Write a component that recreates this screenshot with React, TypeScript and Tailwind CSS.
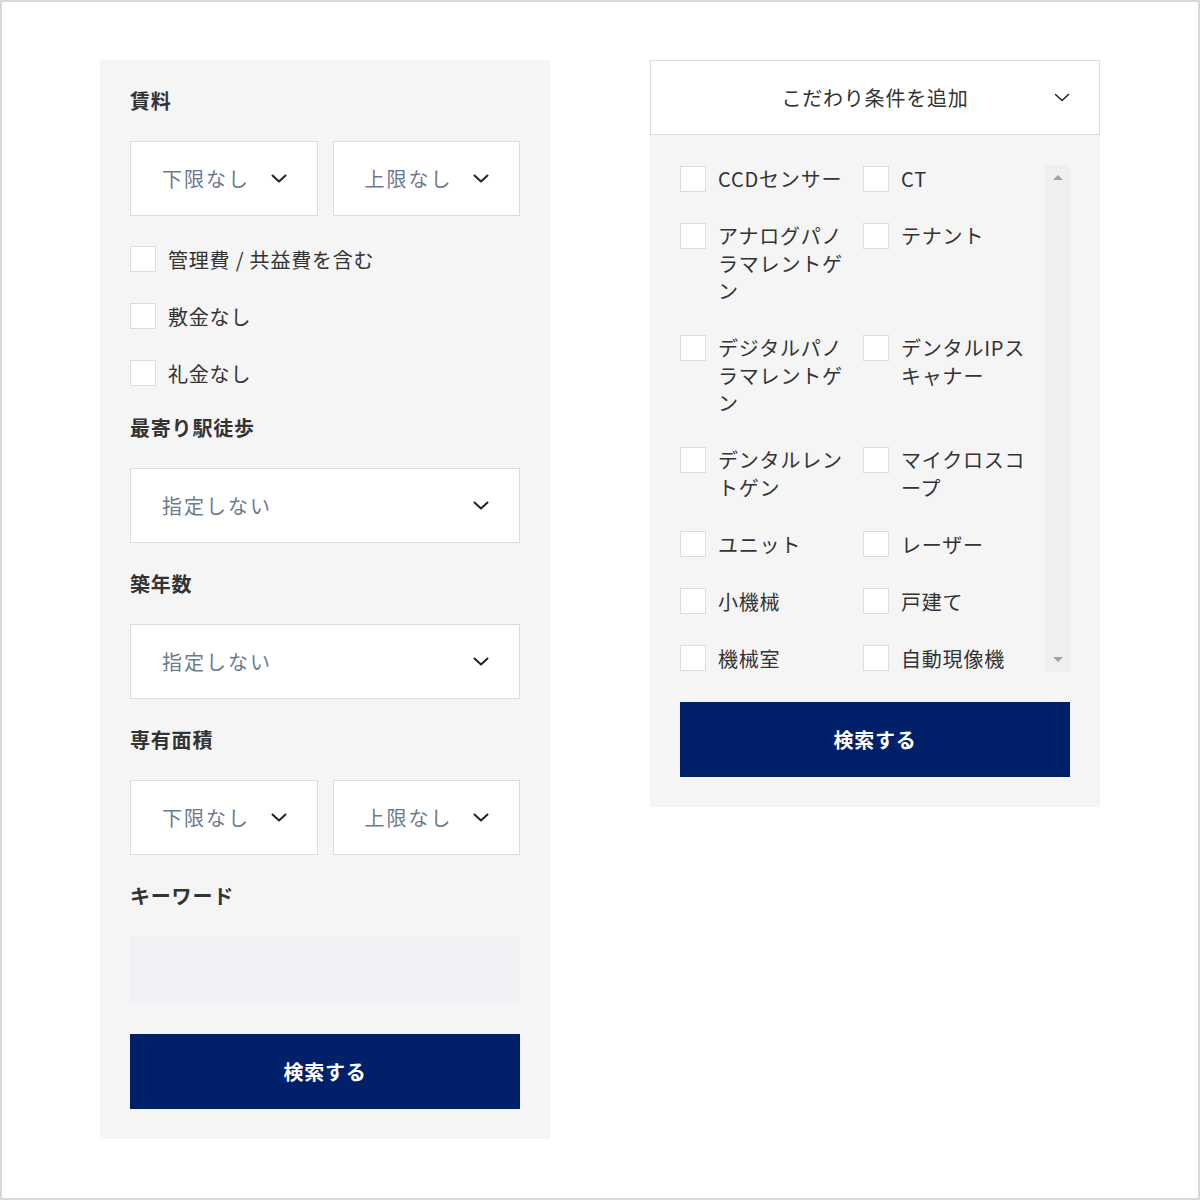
import React from 'react';

const FONT = "font-['Noto_Sans_CJK_JP','Noto_Sans',sans-serif] tracking-[0.05em]";

const Chevron: React.FC<{ thin?: boolean }> = ({ thin }) => (
  <svg width="16" height="9" viewBox="0 0 16 9" fill="none" className="shrink-0">
    <polyline
      points="1.5,1.5 8,7.5 14.5,1.5"
      stroke="#222"
      strokeWidth={thin ? 1.6 : 2}
      strokeLinecap="round"
      strokeLinejoin="round"
    />
  </svg>
);

const Select: React.FC<{ label: string }> = ({ label }) => (
  <div className="flex h-[75px] flex-1 items-center justify-between border border-[#dcdcdc] bg-white pl-[31px] pr-[30px]">
    <span className="text-[20px] leading-[27px] tracking-[0.1em] text-[#6b7a8f]">{label}</span>
    <Chevron />
  </div>
);

const Box: React.FC = () => (
  <span className="block h-[26px] w-[26px] shrink-0 border border-[#dcdcdc] bg-white" />
);

const Check: React.FC<{ label: string }> = ({ label }) => (
  <label className="flex h-[26px] items-center gap-[12px]">
    <Box />
    <span className="text-[20px] leading-[27px] text-[#333]">{label}</span>
  </label>
);

const SectionLabel: React.FC<{ children: React.ReactNode; className?: string }> = ({ children, className = '' }) => (
  <h3 className={`${className} text-[20px] font-bold leading-[22px] text-[#333]`}>{children}</h3>
);

const SearchButton: React.FC = () => (
  <button className="flex h-[75px] w-full items-center justify-center bg-[#002169] text-[20px] font-bold text-white">
    検索する
  </button>
);

const options = [
  'CCDセンサー',
  'CT',
  'アナログパノラマレントゲン',
  'テナント',
  'デジタルパノラマレントゲン',
  'デンタルIPスキャナー',
  'デンタルレントゲン',
  'マイクロスコープ',
  'ユニット',
  'レーザー',
  '小機械',
  '戸建て',
  '機械室',
  '自動現像機',
];

const App: React.FC = () => {
  return (
    <div className={`${FONT} h-[1200px] w-[1200px] border-2 border-[#d9d9d9] bg-white`}>
      <div className="flex items-start gap-[100px] pl-[98px] pt-[58px]">
        {/* left: basic search */}
        <div className="w-[450px] bg-[#f5f5f5] p-[30px]">
          <SectionLabel>賃料</SectionLabel>
          <div className="mt-[29px] flex gap-[15px]">
            <Select label="下限なし" />
            <Select label="上限なし" />
          </div>
          <div className="mt-[30px] flex flex-col gap-[31px]">
            <Check label="管理費 / 共益費を含む" />
            <Check label="敷金なし" />
            <Check label="礼金なし" />
          </div>

          <SectionLabel className="mt-[31px]">最寄り駅徒歩</SectionLabel>
          <div className="mt-[29px] flex">
            <Select label="指定しない" />
          </div>

          <SectionLabel className="mt-[30px]">築年数</SectionLabel>
          <div className="mt-[29px] flex">
            <Select label="指定しない" />
          </div>

          <SectionLabel className="mt-[30px]">専有面積</SectionLabel>
          <div className="mt-[29px] flex gap-[15px]">
            <Select label="下限なし" />
            <Select label="上限なし" />
          </div>

          <SectionLabel className="mt-[30px]">キーワード</SectionLabel>
          <input
            type="text"
            className="mt-[29px] block h-[68px] w-full bg-[#f0f1f5] px-4 text-[20px] outline-none"
          />

          <div className="mt-[30px]">
            <SearchButton />
          </div>
        </div>

        {/* right: extra conditions */}
        <div className="w-[450px]">
          <div className="flex h-[75px] items-center border border-[#dcdcdc] bg-white pr-[29px]">
            <span className="w-[45px]" />
            <span className="flex-1 text-center text-[20px] leading-[27px] text-[#333]">こだわり条件を追加</span>
            <Chevron thin />
          </div>
          <div className="bg-[#f5f5f5] px-[30px] pb-[30px] pt-[30px]">
            <div className="flex h-[507px] overflow-hidden">
              <div className="grid flex-1 grid-cols-[170px_170px] content-start gap-x-[13px] gap-y-[29.5px]">
                {options.map((o) => (
                  <label key={o} className="flex items-start gap-[12px]">
                    <span className="mt-[0.5px]">
                      <Box />
                    </span>
                    <span className="text-[20px] leading-[27.5px] text-[#333]">{o}</span>
                  </label>
                ))}
              </div>
              <div className="flex w-[25px] flex-col items-center justify-between bg-[#efefef] py-[10px]">
                <span className="h-0 w-0 border-x-[5px] border-b-[5px] border-x-transparent border-b-[#a3a3a3]" />
                <span className="h-0 w-0 border-x-[5px] border-t-[5px] border-x-transparent border-t-[#a3a3a3]" />
              </div>
            </div>
            <div className="mt-[30px]">
              <SearchButton />
            </div>
          </div>
        </div>
      </div>
    </div>
  );
};

export default App;
